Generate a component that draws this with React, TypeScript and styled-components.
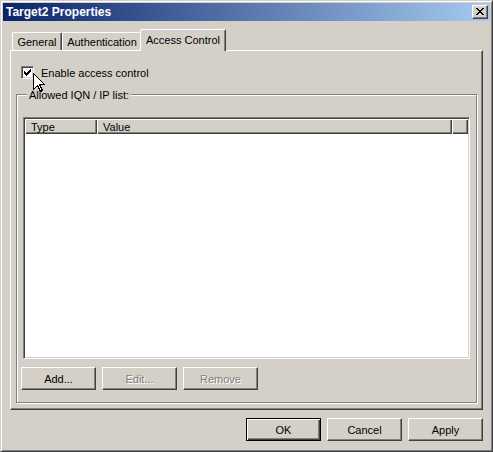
import React from 'react';
import styled, { createGlobalStyle, css } from 'styled-components';

const GlobalStyle = createGlobalStyle`
  html, body {
    margin: 0;
    padding: 0;
    background: #D4D0C8;
  }
  body {
    font-family: "Liberation Sans", Arial, sans-serif;
    font-size: 11px;
  }
`;

// Classic dialog frame
const Window = styled.div`
  position: relative;
  width: 493px;
  height: 452px;
  box-sizing: border-box;
  background: #d4d0c8;
  border: 1px solid;
  border-color: #d4d0c8 #404040 #404040 #d4d0c8;
  box-shadow: inset 1px 1px #ffffff, inset -1px -1px #808080;
  padding: 2px;
  display: flex;
  flex-direction: column;
  overflow: hidden;
`;

const TitleBar = styled.div`
  height: 18px;
  display: flex;
  align-items: center;
  padding-left: 3px;
  background: linear-gradient(to right, #0a246a, #a6caf0);
`;

const Title = styled.span`
  color: #ffffff;
  font-weight: bold;
  font-size: 12px;
  line-height: 14px;
`;

const CloseButton = styled.div`
  margin-left: auto;
  margin-right: 2px;
  width: 16px;
  height: 14px;
  box-sizing: border-box;
  background: #d4d0c8;
  border: 1px solid;
  border-color: #ffffff #404040 #404040 #ffffff;
  box-shadow: inset -1px -1px #808080;
  display: flex;
  align-items: center;
  justify-content: center;
  padding: 0 1px 1px 0;
`;

const Body = styled.div`
  flex: 1;
  display: flex;
  flex-direction: column;
  padding: 8px 7px 0 7px;
`;

const TabStrip = styled.div`
  position: relative;
  z-index: 1;
  height: 21px;
  display: flex;
  align-items: flex-end;
  padding-left: 2px;
`;

const Tab = styled.div<{ $active?: boolean; $width: number }>`
  box-sizing: border-box;
  width: ${p => p.$width}px;
  height: 18px;
  display: flex;
  align-items: center;
  justify-content: center;
  background: #d4d0c8;
  color: #000;
  white-space: nowrap;
  border-top: 1px solid #ffffff;
  border-left: 1px solid #ffffff;
  border-right: 1px solid #404040;
  border-radius: 2px 2px 0 0;
  box-shadow: inset -1px 0 #808080;
  ${p => p.$active && css`
    height: 22px;
    margin: 0 -2px -1px -2px;
    padding-bottom: 1px;
  `}
`;

const TabPanel = styled.div`
  height: 360px;
  box-sizing: border-box;
  display: flex;
  flex-direction: column;
  border: 1px solid;
  border-color: #ffffff #404040 #404040 #ffffff;
  box-shadow: inset -1px -1px #808080;
  padding: 15px 5px 6px 5px;
`;

const CheckRow = styled.label`
  display: flex;
  align-items: center;
  gap: 7px;
  margin-left: 5px;
  height: 13px;
  color: #000;
`;

const CheckBox = styled.span`
  width: 13px;
  height: 13px;
  box-sizing: border-box;
  background: #ffffff;
  border: 1px solid;
  border-color: #808080 #ffffff #ffffff #808080;
  box-shadow: inset 1px 1px #404040, inset -1px -1px #d4d0c8;
  padding: 2px;
  display: flex;
`;

const GroupBox = styled.div`
  margin-top: 15px;
  flex: 1;
  display: flex;
  flex-direction: column;
  border: 1px solid #808080;
  box-shadow: inset 1px 1px #ffffff, 1px 1px #ffffff;
  padding: 0 6px 12px 6px;
`;

const GroupLabel = styled.span`
  align-self: flex-start;
  margin: -6px 0 0 4px;
  padding: 0 2px;
  line-height: 13px;
  background: #d4d0c8;
  color: #000;
`;

const ListView = styled.div`
  margin-top: 15px;
  height: 242px;
  box-sizing: border-box;
  background: #ffffff;
  border: 1px solid;
  border-color: #808080 #ffffff #ffffff #808080;
  box-shadow: inset 1px 1px #404040, inset -1px -1px #d4d0c8;
  padding: 1px;
`;

const ListHeader = styled.div`
  display: flex;
  height: 15px;
`;

const HeaderCell = styled.div<{ $width?: number }>`
  box-sizing: border-box;
  ${p => (p.$width ? css`width: ${p.$width}px;` : css`flex: 1;`)}
  height: 15px;
  background: #d4d0c8;
  box-shadow: inset 1px 1px #ffffff, inset -1px -1px #404040, inset -2px -2px #808080;
  padding-left: 6px;
  display: flex;
  align-items: center;
  color: #000;
`;

const ButtonRow = styled.div<{ $end?: boolean }>`
  display: flex;
  gap: 6px;
  margin-top: 8px;
  justify-content: ${p => (p.$end ? 'flex-end' : 'flex-start')};
`;

const ListButtons = styled(ButtonRow)`
  margin-left: -2px;
`;

const Button = styled.button<{ $default?: boolean }>`
  width: 75px;
  height: 23px;
  box-sizing: border-box;
  padding: 0;
  background: #d4d0c8;
  font-family: "Liberation Sans", Arial, sans-serif;
  font-size: 11px;
  color: #000;
  border: 1px solid;
  border-color: #ffffff #404040 #404040 #ffffff;
  box-shadow: inset -1px -1px #808080;
  border-radius: 0;

  ${p => p.$default && css`
    border-color: #000000;
    box-shadow: inset 1px 1px #ffffff, inset -1px -1px #404040, inset -2px -2px #808080;
  `}

  &:disabled {
    color: #808080;
    text-shadow: 1px 1px #ffffff;
  }
`;

const Cursor = styled.svg`
  position: absolute;
  left: 32px;
  top: 72px;
`;

// small bitmap glyphs (close X, check mark)
const Pixels: React.FC<{ rows: string[] }> = ({ rows }) => (
  <svg width={rows[0].length} height={rows.length} shapeRendering="crispEdges">
    {rows.map((row, y) =>
      row.split('').map((c, x) =>
        c === 'x' ? <rect key={`${x}-${y}`} x={x} y={y} width={1} height={1} fill="#000" /> : null
      )
    )}
  </svg>
);

const closeGlyph = [
  'xx....xx',
  '.xx..xx.',
  '..xxxx..',
  '...xx...',
  '..xxxx..',
  '.xx..xx.',
  'xx....xx',
];

const checkGlyph = [
  '......x',
  '.....xx',
  'x...xxx',
  'xx.xxx.',
  'xxxxx..',
  '.xxx...',
  '..x....',
];

const App: React.FC = () => {
  return (
    <>
      <GlobalStyle />
      <Window>
        <TitleBar>
          <Title>Target2 Properties</Title>
          <CloseButton>
            <Pixels rows={closeGlyph} />
          </CloseButton>
        </TitleBar>

        <Body>
          <TabStrip>
            <Tab $width={50}>General</Tab>
            <Tab $width={80}>Authentication</Tab>
            <Tab $width={86} $active>Access Control</Tab>
          </TabStrip>

          <TabPanel>
            <CheckRow>
              <CheckBox>
                <Pixels rows={checkGlyph} />
              </CheckBox>
              <span>Enable access control</span>
            </CheckRow>

            <GroupBox>
              <GroupLabel>Allowed IQN / IP list:</GroupLabel>
              <ListView>
                <ListHeader>
                  <HeaderCell $width={72}>Type</HeaderCell>
                  <HeaderCell $width={355}>Value</HeaderCell>
                  <HeaderCell />
                </ListHeader>
              </ListView>
              <ListButtons>
                <Button>Add...</Button>
                <Button disabled>Edit...</Button>
                <Button disabled>Remove</Button>
              </ListButtons>
            </GroupBox>
          </TabPanel>

          <ButtonRow $end>
            <Button $default>OK</Button>
            <Button>Cancel</Button>
            <Button>Apply</Button>
          </ButtonRow>
        </Body>

        {/* mouse pointer over the checkbox */}
        <Cursor width="13" height="20" viewBox="0 0 13 20" shapeRendering="crispEdges">
          <path
            d="M0.5,0.5 L0.5,16.5 L4.5,12.5 L7.5,18.5 L9.5,17.5 L6.5,11.5 L11.5,11.5 Z"
            fill="#fff"
            stroke="#000"
            strokeWidth="1"
          />
        </Cursor>
      </Window>
    </>
  );
};

export default App;
